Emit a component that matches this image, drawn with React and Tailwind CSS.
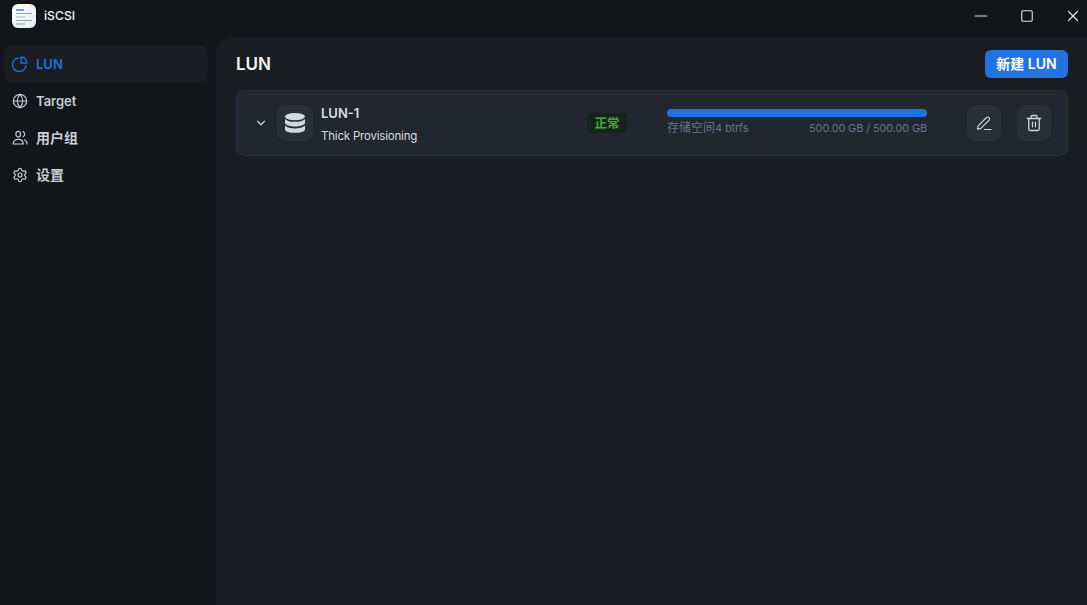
import { ChevronDown, Globe, Settings, Trash2, X, Minus, Square } from "lucide-react";

const font = "font-['Inter','Noto_Sans_CJK_SC',sans-serif]";

function PieIcon() {
  return (
    <svg width="16" height="16" viewBox="0 0 16 16" fill="none" stroke="currentColor" strokeWidth="1.4" strokeLinecap="round" strokeLinejoin="round">
      <path d="M6.300 2A6.800 6.800 0 1 0 14 9.700" />
      <path d="M9 1v6h6a6 6 0 0 0-6-6z" />
    </svg>
  );
}

function UsersIcon() {
  return (
    <svg width="16" height="16" viewBox="0 0 16 16" fill="none" stroke="currentColor" strokeWidth="1.2" strokeLinecap="round" strokeLinejoin="round">
      <ellipse cx="6.200" cy="4.200" rx="2.300" ry="2.900" />
      <path d="M11 1.600a2.900 2.900 0 0 1 0 5.200" />
      <path d="M1.200 14c0-2.800 2-4.700 5-4.700s5 1.900 5 4.700z" />
      <path d="M12.300 9.700c1.600.5 2.700 2.100 2.700 4.300" />
    </svg>
  );
}

function AppLogo() {
  return (
    <div className="flex h-6 w-6 flex-col gap-[2px] rounded-[6px] bg-gradient-to-br from-white to-[#e4e9f2] px-[4px] pt-[5px]">
      <div className="h-[2px] w-[8px] bg-[#6f9df0]" />
      <div className="h-[1px] w-full bg-[#93a1b3]" />
      <div className="h-[2px] w-[9px] bg-[#ccd4de]" />
      <div className="h-[1px] w-full bg-[#93a1b3]" />
      <div className="h-[2px] w-[9px] bg-[#bcc5d1]" />
    </div>
  );
}

function DatabaseIcon() {
  return (
    <svg width="22" height="22" viewBox="0 0 22 22" fill="#d4d8de">
      <ellipse cx="11" cy="4.600" rx="10" ry="3.600" />
      <path d="M1 6.900c1.600 1.900 5.400 2.900 10 2.900s8.400-1 10-2.900v4.300c-1 2-5 3.200-10 3.200s-9-1.200-10-3.200z" />
      <path d="M1 13.600c1.600 1.900 5.400 2.900 10 2.900s8.400-1 10-2.900v3.800c0 2-4.500 3.400-10 3.400s-10-1.400-10-3.400z" />
    </svg>
  );
}

function EditIcon() {
  return (
    <svg width="16" height="16" viewBox="0 0 16 16" fill="none" stroke="#d4d8de" strokeWidth="1.2" strokeLinecap="round" strokeLinejoin="round">
      <path d="M1.500 14.200l.7-3.400 8.300-8.300a1.500 1.500 0 0 1 2.200 0l.4.400a1.500 1.500 0 0 1 0 2.200l-8.300 8.300z" />
      <path d="M8.500 14.500h6.500" />
    </svg>
  );
}

const navItems = [
  { label: "LUN", icon: <PieIcon />, size: "text-[13px] pt-[2px]", active: true },
  { label: "Target", icon: <Globe size={16} strokeWidth={1.7} />, size: "text-[13px] pt-[2px]" },
  { label: "用户组", icon: <UsersIcon />, size: "text-sm" },
  { label: "设置", icon: <Settings size={16} strokeWidth={1.8} />, size: "text-sm" },
];

export default function App() {
  return (
    <div className={`${font} flex h-[605px] w-[1087px] flex-col overflow-hidden bg-[#131619] text-white`}>
      {/* Title bar */}
      <header className="flex h-[38px] shrink-0 items-start justify-between">
        <div className="flex items-center gap-2 pl-3 pt-1">
          <AppLogo />
          <span className="text-[12.2px] font-medium text-[#f2f3f5]">iSCSI</span>
        </div>
        <div className="-mr-[9px] flex h-8 items-center text-[#e3e5e8]">
          <div className="flex w-[46px] items-center justify-center">
            <Minus size={20} strokeWidth={1.4} />
          </div>
          <div className="flex w-[46px] items-center justify-center">
            <Square size={14} strokeWidth={1.9} />
          </div>
          <div className="flex w-[46px] items-center justify-center">
            <X size={18} strokeWidth={1.6} />
          </div>
        </div>
      </header>

      <div className="flex min-h-0 flex-1">
        {/* Sidebar */}
        <nav className="flex w-[216px] shrink-0 flex-col gap-[1px] pl-1 pr-2 pt-2">
          {navItems.map((item) => (
            <div
              key={item.label}
              className={`flex h-9 items-center gap-2 rounded-lg pl-2 font-semibold ${
                item.active ? "bg-[#1a1d22] text-[#2070e0]" : "text-[#c9cdd4]"
              }`}
            >
              {item.icon}
              <span className={item.size}>{item.label}</span>
            </div>
          ))}
        </nav>

        {/* Main */}
        <main className="flex-1 rounded-tl-2xl bg-[#191c20] pl-5 pr-[19px] pt-3">
          <div className="flex h-7 items-center justify-between">
            <h1 className="pt-[2px] text-[17px] font-semibold text-[#f5f6f7]">LUN</h1>
            <button className="flex h-7 w-[83px] items-center justify-center rounded-md bg-[#2272e0] text-sm font-semibold text-white">
              新建 LUN
            </button>
          </div>

          <div className="mt-3 flex h-[66px] items-center rounded-lg border border-[#2b3038] bg-[#22262e] pl-4 pr-4">
            <ChevronDown size={14} className="ml-[1px] text-[#d4d8de]" />
            <div className="ml-[9px] flex h-9 w-9 items-center justify-center rounded-lg bg-[#2a2e36]">
              <DatabaseIcon />
            </div>
            <div className="ml-2 w-[266px] pt-[1px]">
              <div className="text-[13px] font-semibold leading-5 text-[#d8dce2]">LUN-1</div>
              <div className="mt-[5px] text-[11.5px] leading-4 tracking-[-0.2px] text-[#d8dce2]">Thick Provisioning</div>
            </div>
            <span className="flex h-5 w-10 items-center justify-center rounded-sm bg-[#14261a] pt-[2px] text-[12.500px] font-semibold text-[#46a83f]">
              正常
            </span>
            <div className="ml-10 w-[260px] pb-[1px]">
              <div className="h-2 rounded-sm bg-[#2272e0]" />
              <div className="mt-[3px] flex justify-between text-[11px] leading-4 tracking-[-0.16px] text-[#65768c]">
                <span>
                  <span className="text-xs tracking-normal">存储空间</span>4 btrfs
                </span>
                <span>500.00 GB / 500.00 GB</span>
              </div>
            </div>
            <button className="ml-10 flex h-9 w-[34px] items-center justify-center rounded-lg bg-[#2a2e36]">
              <EditIcon />
            </button>
            <button className="ml-4 flex h-9 w-[34px] items-center justify-center rounded-lg bg-[#2a2e36]">
              <Trash2 size={18} strokeWidth={1.7} className="text-[#d4d8de]" />
            </button>
          </div>
        </main>
      </div>
    </div>
  );
}
